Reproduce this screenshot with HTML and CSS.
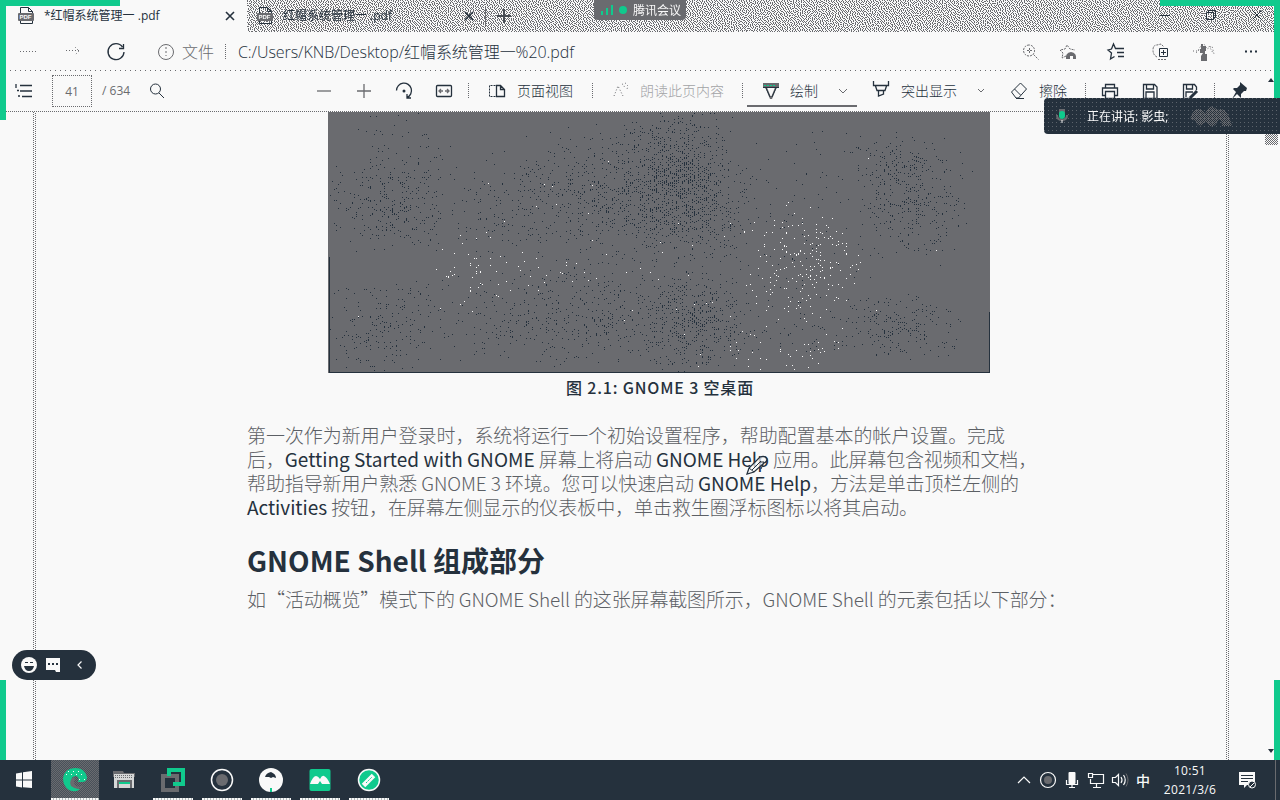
FILE: index.html
```html
<!DOCTYPE html>
<html lang="zh-CN">
<head>
<meta charset="utf-8">
<title>红帽系统管理一 .pdf</title>
<link rel="stylesheet" href="styles.css">
</head>
<body>
<div class="screen">
  <header class="tabs">
    <canvas class="grain" id="tabGrain" width="1280" height="32"></canvas>
    <div class="tab active">
      <svg class="file" width="16" height="18" viewBox="0 0 16 18"><path class="ln" d="M2.500 16.500V.5h8l4 4v12zM10.500.5v4h4"/><rect x="0" y="6" width="16" height="8" rx="1" fill="#6a6b6f"/><text x="1.500" y="12.400" class="pdf">PDF</text></svg>
      <span class="title t1">*红帽系统管理一 .pdf</span>
      <svg width="10" height="10" viewBox="0 0 10 10"><path class="ln x" d="M1 1l8 8M9 1l-8 8"/></svg>
    </div>
    <div class="tab second">
      <svg class="file" width="16" height="18" viewBox="0 0 16 18"><path class="ln" d="M2.500 16.500V.5h8l4 4v12zM10.500.5v4h4"/><rect x="0" y="6" width="16" height="8" rx="1" fill="#6a6b6f"/><text x="1.500" y="12.400" class="pdf">PDF</text></svg>
      <span class="title t2">红帽系统管理一 .pdf</span>
      <svg width="10" height="10" viewBox="0 0 10 10"><path class="ln x" d="M1 1l8 8M9 1l-8 8"/></svg>
    </div>
    <svg class="plus" width="16" height="16" viewBox="0 0 16 16"><path d="M8 1v14M1 8h14" stroke="#484d54" stroke-width="2"/></svg>
    <div class="winctl">
      <svg width="12" height="12" viewBox="0 0 12 12"><path class="ln" d="M1 6.500h10"/></svg>
      <svg width="12" height="12" viewBox="0 0 12 12"><path class="ln" d="M1.500 3.500h7v7h-7zM3.500 3.500v-2h7v7h-2"/></svg>
      <svg width="12" height="12" viewBox="0 0 12 12"><path class="ln" d="M1.500 1.500l9 9M10.500 1.500l-9 9"/></svg>
    </div>
  </header>

  <nav class="address">
    <svg viewBox="0 0 24 24"><path class="gy dots" d="M4 11.500h16"/></svg>
    <svg viewBox="0 0 24 24"><path class="gy dots" d="M5 10.500h13M14 7l4 4-4 4"/></svg>
    <svg viewBox="0 0 24 24"><path class="ln w" d="M18.500 7A8 8 0 1 0 20 12M19.500 4v4.500H15"/></svg>
    <svg viewBox="0 0 24 24"><circle class="gy" cx="12" cy="12" r="7.500"/><path class="gy" stroke-dasharray="2 2" d="M12 7v9"/></svg>
    <span class="scheme">文件</span>
    <i class="sep"></i>
    <span class="url"><span data-w="336">C:/Users/KNB/Desktop/<span class="han">红帽系统管理一</span>%20.pdf</span></span>
    <svg viewBox="0 0 24 24"><path class="gy fine" d="M10 5a5.500 5.500 0 1 0 .1 0M14.500 14.500l5 5M8 10.500h5M10.500 8v5"/></svg>
    <svg viewBox="0 0 24 24"><path class="gy fine" d="M9 16l-4 2 1-5-3-3 5-1 2-4 3 4 5 1"/><path d="M9 19q-1-6 5-7 6 1 5 7h-3v-3h-3v3z" fill="#6a6b6f"/></svg>
    <svg viewBox="0 0 24 24"><path class="ln w" d="M13 8.500h-1.500L9.500 4 7.500 9 4 10l3.500 3-1 6 4-2.500M12 8.500h8M13 12.500h7M14 16.500h6"/></svg>
    <svg viewBox="0 0 24 24"><path class="gy fine" d="M8 17q-4-2-4-7 0-5 4-5l4-1 3 3M9 19.500h9"/><path class="ln" d="M18.500 16.500V8.500h-8v8zM14.500 10v5M12 12.500h5"/></svg>
    <svg viewBox="0 0 24 24"><path class="gy dots" d="M1 11h5l2-4 4-3 3 5 5-3 2 8M4 13l4-4M17 6l4 7"/><path d="M9 4h2v2h3v5h-1v3h2v7H9v-5l2-3H8V9h1z" fill="#6a6b6f"/></svg>
    <svg viewBox="0 0 24 24"><path d="M6 10.500h2v2H6zm5 0h2v2h-2zm5 0h2v2h-2z" fill="#25313d"/></svg>
  </nav>

  <div class="tools">
    <svg viewBox="0 0 24 24"><path class="ln w" d="M8 6.500h12M8 12h12M10 17.500h10M4 5v4M5 11.500h2M6 17h2"/></svg>
    <span class="pagebox">41</span>
    <span class="total">/ 634</span>
    <svg viewBox="0 0 24 24"><circle class="ln" cx="10.500" cy="10" r="5"/><path class="ln" d="M14 14l5 5"/></svg>
    <svg viewBox="0 0 24 24"><path class="gy w" d="M5 12h14"/></svg>
    <svg viewBox="0 0 24 24"><path class="gy w" d="M5 12h14M12 5v14"/></svg>
    <svg viewBox="0 0 24 24"><path class="ln w" d="M4.500 11.500A7.500 7.500 0 1 1 15 18.500M15 15v4h4"/><circle cx="12" cy="12" r="1.500" fill="#25313d"/></svg>
    <svg viewBox="0 0 24 24"><rect class="ln w" x="4.500" y="6.500" width="15" height="11" rx="1"/><path class="gy w" d="M7 12h4M13 12h4M9 10l-2 2 2 2M15 10l2 2-2 2"/></svg>
    <i class="sep"></i>
    <svg viewBox="0 0 24 24"><path class="ln" stroke-dasharray="2 1" d="M10.500 6.500h-6v11h6"/><path class="ln w" d="M11.500 6.500h4l4 4v7h-8zM15.500 6.500v4h4"/></svg>
    <span class="label">页面视图</span>
    <i class="sep"></i>
    <svg viewBox="0 0 24 24"><path class="gy dots" d="M5 17L9 7l5 10M13 5q3 1 2 4M16 4q4 2 2 6"/></svg>
    <span class="label off">朗读此页内容</span>
    <i class="sep"></i>
    <span class="draw"><svg viewBox="0 0 24 24"><path d="M4 4h16v4h-2l-5 12h-2L6 8H4z" fill="#6a6b6f"/><path d="M8 8.500h8L12.500 17h-1z" fill="#f9f9f9"/><path d="M5 6.500h12" stroke="#10ca8d" stroke-dasharray="2 1"/><path class="ln" d="M4 8.500h16M7 9l4 9M17 9l-4 9"/></svg></span>
    <span class="label dim">绘制</span>
    <svg viewBox="0 0 24 24"><path class="gy" d="M8 10l4 4 4-4"/></svg>
    <svg class="lift" viewBox="0 0 24 24"><path class="ln w" d="M4.500 4v4.500h15V4M6.500 9l1.500 4.500h8L17.500 9M9.500 14v5l5-2v-3"/></svg>
    <span class="label dim">突出显示</span>
    <svg viewBox="0 0 24 24"><path class="gy" d="M9 10l3 3 3-3"/></svg>
    <svg viewBox="0 0 24 24"><path class="ln" d="M4.500 13l9-9 6 6-8 9H9zM7.500 10l6 6M9 19.500h8"/></svg>
    <span class="label dim">擦除</span>
    <i class="sep"></i>
    <svg viewBox="0 0 24 24"><path class="ln w" d="M7.500 9V5.500h9V9M7 16.500H4.500V9h15v7.500H17M7.500 12.500h9v7h-9z"/></svg>
    <svg viewBox="0 0 24 24"><path class="ln w" d="M5.500 5.500h11l2.500 2.500v11.500H5.500zM8.500 6v4h7V6M8 19v-6h8v6"/></svg>
    <svg viewBox="0 0 24 24"><path class="ln w" d="M12 19.500H5.500v-14h11L18.500 8v3M8.500 6v4h6V6M8 18v-5h7"/><path d="M12 19l7-7" stroke="#25313d" stroke-width="3"/></svg>
    <i class="sep"></i>
    <svg viewBox="0 0 24 24"><path d="M13 3l7 6-1 3-2 0-3 3v4l-4-4-5 5 4-7-3-3 1-1h3l3-3z" fill="#25313d"/></svg>
  </div>

  <main class="viewer">
    <article class="page">
      <canvas class="figure" id="figure" width="662" height="262"></canvas>
      <p class="caption"><span data-w="188">图 2.1: GNOME 3 空桌面</span></p>
      <div class="body">
        <p><span data-w="758">第一次作为新用户登录时，系统将运行一个初始设置程序，帮助配置基本的帐户设置。完成</span></p>
        <p><span data-w="790">后，<b data-w="250">Getting Started with GNOME</b> 屏幕上将启动 <b data-w="113">GNOME Help</b> 应用。此屏幕包含视频和文档，</span></p>
        <p><span data-w="772">帮助指导新用户熟悉 GNOME 3 环境。您可以快速启动 <b data-w="113">GNOME Help</b>，方法是单击顶栏左侧的</span></p>
        <p><span data-w="671"><b data-w="80">Activities</b> 按钮，在屏幕左侧显示的仪表板中，单击救生圈浮标图标以将其启动。</span></p>
      </div>
      <h2><span data-w="298">GNOME Shell 组成部分</span></h2>
      <div class="body"><p><span data-w="819">如<q>“</q>活动概览<q class="r">”</q>模式下的 GNOME Shell 的这张屏幕截图所示，GNOME Shell 的元素包括以下部分：</span></p></div>
    </article>
    <div class="scroll"><i class="thumb"></i><i class="down"></i></div>
  </main>

  <footer class="taskbar">
    <div class="apps">
      <span class="start"><svg viewBox="0 0 24 24"><path fill="#f9f9f9" d="M4 5.500l6-1v7H4zM11 4.300l9-1.300v8.500h-9zM4 12.500h6v7l-6-1zM11 12.500h9V20l-9-.8z"/></svg></span>
      <span class="app on"><svg viewBox="0 0 24 24"><path fill="#10ca8d" d="M0 10Q2 0 12 0t12 9q0 5-5 5h-4q2-5-2-6-5 0-5 6 1 6 9 7-4 4-11 1Q0 18 0 10z"/><path fill="#6a6b6f" d="M8 18q-3-7 5-9-4 6 0 9 4 2 8-1-5 7-13 1z"/><path stroke="#f9f9f9" stroke-dasharray="1 4" d="M5 3.500h15M3 6.500h18M16 11.500h7"/></svg></span>
      <span class="app no"><svg viewBox="0 0 24 24"><path fill="#6a6b6f" d="M1 3h10l1 2h11v4H1z"/><path fill="#d5d7d7" d="M2 6h20v14H2z"/><path fill="none" stroke="#6a6b6f" stroke-width="2" d="M6 20v-7h13v7"/><path fill="#10ca8d" d="M7 14h11v2H7z"/><path stroke="#6a6b6f" stroke-dasharray="1 1" d="M3 7.500h18M3 9.500h18"/></svg></span>
      <span class="app"><svg viewBox="0 0 24 24"><path fill="none" stroke="#6a6b6f" stroke-width="4" d="M2 8h14v14H2z"/><path fill="none" stroke="#10ca8d" stroke-width="4" d="M8 8V2h14v14H12"/></svg></span>
      <span class="app"><svg viewBox="0 0 24 24"><circle cx="12" cy="12" r="10.500" fill="none" stroke="#f9f9f9" stroke-width="1.500"/><circle cx="12" cy="12" r="6" fill="#6a6b6f"/></svg></span>
      <span class="app"><svg viewBox="0 0 24 24"><circle cx="12" cy="12" r="12" fill="#f9f9f9"/><path fill="#25313d" d="M6 9q1-4 6-5 5 2 5 6l-3-1-2 1-2-1z"/><path stroke="#10ca8d" stroke-width="2" d="M12 20v4"/></svg></span>
      <span class="app"><svg viewBox="0 0 24 24"><rect x="1.500" y="1" width="21" height="22" rx="2" fill="#10ca8d"/><path fill="#f9f9f9" d="M2 16q3-8 6-8 2 0 4 3 2-4 4-3 3 1 6 8h-8l-2-3-2 3z"/></svg></span>
      <span class="app"><svg viewBox="0 0 24 24"><circle cx="12" cy="12" r="10.500" fill="#10ca8d" stroke="#f9f9f9" stroke-width="1.500"/><path stroke="#f9f9f9" stroke-width="5" d="M6.500 17.500l10-10"/><path stroke="#10ca8d" stroke-width="1" stroke-dasharray="2 1" d="M9 15l6-6"/></svg></span>
    </div>
    <div class="tray">
      <svg viewBox="0 0 24 24"><path class="wh" d="M6 15l6-6 6 6"/></svg>
      <svg viewBox="0 0 24 24"><circle class="wh" cx="12" cy="12" r="7.500"/><circle cx="12" cy="12" r="4" fill="#6a6b6f"/></svg>
      <svg viewBox="0 0 24 24"><rect x="8.500" y="4" width="7" height="12" rx="1" fill="#f9f9f9"/><path class="wh" d="M6.500 12v4.500h11V12M12 16v4M9 19.500h6"/></svg>
      <svg viewBox="0 0 24 24"><path class="wh" d="M9 6.500h10.500v9h-13V11M4.500 5.500h4v4h-4zM12.500 16v3M9 19.500h8"/></svg>
      <svg viewBox="0 0 24 24"><path class="wh" d="M4.500 9.500h3l3-3v11l-3-3h-3zM13 9q2 3 0 6M15.500 7q3.500 5 0 10"/><path class="gy" d="M18 5.500q4 6.500 0 13"/></svg>
      <span class="ime">中</span>
      <span class="clock"><span>10:51</span><span>2021/3/6</span></span>
      <svg viewBox="0 0 24 24"><path fill="#f9f9f9" d="M4 4h16v10l-4 3h-4l-3 3v-3H4z"/><path stroke="#25313d" d="M6 7.500h12M6 10.500h12M6 13.500h7"/><circle cx="17" cy="16.500" r="3.500" fill="#25313d" stroke="#f9f9f9"/><path stroke="#f9f9f9" d="M15 19l4-4"/></svg>
      <i class="edge"></i>
    </div>
  </footer>

  <i class="frame tl"></i><i class="frame lt"></i><i class="frame tr"></i><i class="frame rt"></i><i class="frame lb"></i><i class="frame rb"></i>
  <div class="meeting"><svg width="12" height="10" viewBox="0 0 12 10"><path stroke="#10ca8d" stroke-width="2" d="M1 10V6M6 10V3M11 10V0"/></svg><i></i><span>腾讯会议</span></div>
  <div class="speaking"><svg width="12" height="16" viewBox="0 0 12 16"><path d="M3 1h6v4H3z" fill="#6a6b6f"/><rect x="3" y="3" width="6" height="8" rx="3" fill="#10ca8d"/><path fill="none" stroke="#6a6b6f" stroke-width="2" d="M1 7q0 5 5 5t5-5"/><path stroke="#f9f9f9" d="M6 12v3"/></svg><span>正在讲话: 影虫;</span><svg class="smudge" width="44" height="22" viewBox="0 0 44 22"><defs><pattern id="sp" width="2" height="2" patternUnits="userSpaceOnUse"><path fill="#6a6b6f" d="M0 0h1v1H0zM1 1h1v1H1z"/></pattern></defs><path fill="url(#sp)" d="M0 14Q4 2 10 4q4 1 5 5Q19-2 25 3q3 3 5 1 8 0 12 17H32q0-5-3-7-4 9-9 7-4-6-6-3-6 6-8-2z"/></svg></div>
  <div class="dock">
    <svg width="16" height="16" viewBox="0 0 16 16"><circle cx="8" cy="8" r="8" fill="#f9f9f9"/><path fill="#25313d" d="M4 5h3v1H4zM9 5h3v1H9zM3 9h10q-1 5-5 5T3 9z"/></svg>
    <svg width="14" height="14" viewBox="0 0 14 14"><path fill="#f9f9f9" d="M0 0h14v14h-4l-1-2H0z"/><path fill="#25313d" d="M2 5h2v2H2zM6 5h2v2H6zM10 5h2v2h-2z"/></svg>
    <svg width="5" height="8" viewBox="0 0 5 8"><path class="wh" d="M4.500.5L1 4l3.500 3.500"/></svg>
  </div>
  <svg class="pen" width="24" height="24" viewBox="0 0 24 24"><path d="M2 20l2-6L15 3q5-2 7 2 0 3-3 4L9 18z" fill="#f9f9f9" fill-opacity=".7" stroke="#25313d" stroke-width="1.300"/><path class="ln" d="M4 14l5 4M16 7l-9 9M15 8h4l-3 7"/></svg>
  <i class="uparrow"></i>
</div>
<script src="script.js"></script>
</body>
</html>
```
FILE: styles.css
```css
* { box-sizing: border-box; }
body { margin: 0; background: #f9f9f9; color: #25313d; font-family: "Open Sans", "Noto Sans CJK SC", sans-serif; }
p, h2 { margin: 0; }
i { display: block; }
svg { display: block; flex: none; }
.screen { position: relative; width: 1280px; height: 800px; overflow: hidden; display: flex; flex-direction: column; }
.ln, .gy, .wh { fill: none; stroke: #25313d; stroke-width: 1; }
.gy { stroke: #6a6b6f; }
.wh { stroke: #f9f9f9; stroke-width: 1.2; }
.ln.w, .gy.w { stroke-width: 1.3; }
.x { stroke-width: 1.6; }
.dots { stroke-dasharray: 1 2; }
.fine { stroke-dasharray: 2 1; }
.pdf { font: 700 6px "Liberation Sans", sans-serif; fill: #f9f9f9; }

.tabs { position: relative; height: 32px; flex: none; display: flex; align-items: center; padding-left: 6px; }
.grain { position: absolute; inset: 0; }
.tab { position: relative; display: flex; align-items: center; height: 32px; }
.active { width: 241px; background: #f9f9f9; padding-left: 12px; }
.second { width: 239px; height: 20px; border-right: 1px solid #6a6b6f; padding-left: 10px; }
.title { font-size: 12px; line-height: 20px; white-space: nowrap; }
.t1 { margin-left: 10px; width: 181px; }
.t2 { margin-left: 10px; width: 181px; }
.plus { position: relative; margin-left: 10px; }
.winctl { position: relative; display: flex; gap: 34px; margin-left: 647px; margin-top: -3px; }

.address { height: 39px; flex: none; display: grid; grid-template-columns: 45px 43px 50px 28px 43px 13px 781px 38px 47px 45px 43px 47px 41px; align-items: center; padding-left: 16px; background: repeating-linear-gradient(90deg, #6a6b6f 0 1px, #f9f9f9 1px 5px) 0 100% / 100% 1px no-repeat; }
.address svg, .tools svg, .tray svg, .apps svg { width: 24px; height: 24px; }
.scheme { font-size: 16px; color: #6a6b6f; font-weight: 300; line-height: 24px; }
.sep { width: 1px; height: 15px; background: repeating-linear-gradient(#6a6b6f 0 1px, #f9f9f9 1px 2px); }
.url { font-size: 16px; line-height: 24px; white-space: nowrap; font-weight: 350; }
.han { font-weight: 300; }

.tools { height: 41px; flex: none; display: grid; grid-template-columns: 40px 50px 43px 167px 40px 40px 40px 36px 17px 32px 75px 17px 31px 102px 17px 31px 41px 38px 32px 68px 38px 32px 46px 13px 40px 40px 36px 13px 41px; align-items: center; padding-left: 12px; padding-bottom: 2px; background: repeating-linear-gradient(90deg, #6a6b6f 0 1px, #f9f9f9 1px 2px) 0 100% / 100% 1px no-repeat; }
.pagebox { width: 40px; height: 32px; border: 1px dotted #6a6b6f; font-size: 12px; line-height: 31px; text-align: center; color: #6a6b6f; }
.total { font-size: 12px; color: #6a6b6f; white-space: nowrap; }
.label { font-size: 14px; line-height: 22px; white-space: nowrap; font-weight: 300; }
.off { color: #a2a3a6; font-weight: 300; }
.draw { position: relative; }
.draw::after { content: ""; position: absolute; left: -12px; top: 26px; width: 110px; height: 2px; background: #6a6b6f; }
.lift { margin-top: -3px; }

.viewer { position: relative; flex: 1; min-height: 0; display: flex; justify-content: space-between; padding-left: 33px; }
.page { width: 1196px; padding-left: 214px; position: relative; }
.page::before, .page::after { content: ""; position: absolute; top: 0; bottom: 0; width: 3px; left: 0; background: linear-gradient(#6a6b6f 0 0) 0 0 / 1px 1px, #f9f9f9; background: repeating-linear-gradient(#6a6b6f 0 1px, #f9f9f9 1px 2px) 0 0 / 1px 100% no-repeat, repeating-linear-gradient(#f9f9f9 0 1px, #6a6b6f 1px 2px) 2px 0 / 1px 100% no-repeat; }
.page::after { left: auto; right: 0; }
.figure { display: block; margin-left: 81px; }
.caption { margin-left: 82px; width: 662px; text-align: center; font: 500 16px/24px "Noto Sans CJK SC", sans-serif; margin-top: 1px; white-space: nowrap; }
.body { font: 300 19px/24px "Noto Sans CJK SC", sans-serif; color: #5c6065; white-space: nowrap; margin-top: 24px; }
.body b { font-weight: 400; color: #25313d; display: inline-block; }
.body q { quotes: none; display: inline-block; width: 19px; text-align: right; }
.body q.r { text-align: left; }
.body q::before, .body q::after { content: none; }
h2 { font: 700 28px/36px "Noto Sans CJK SC", sans-serif; margin-top: 23px; white-space: nowrap; }
h2 + .body { margin-top: 9px; }
.scroll { width: 14px; margin-right: 2px; display: flex; flex-direction: column; justify-content: space-between; align-items: center; padding: 22px 0 7px; }
.thumb { width: 13px; height: 11px; background: repeating-conic-gradient(#6a6b6f 0 25%, #f9f9f9 0 50%) 0 0 / 2px 2px; }
.down { border: 3px solid transparent; border-top: 4px solid #25313d; border-bottom: 0; }
.uparrow { position: absolute; left: 1268px; top: 78px; border: 3px solid transparent; border-bottom: 4px solid #25313d; border-top: 0; }

.taskbar { height: 40px; flex: none; background: #25313d; display: flex; justify-content: space-between; }
.apps { display: flex; align-items: stretch; }
.apps span { display: flex; align-items: center; justify-content: center; width: 49px; }
.apps .start { width: 51px; padding-right: 3px; }
.app { position: relative; }
.apps .app:not(.on) { padding-right: 2px; }
.app::after { content: ""; position: absolute; left: 4px; right: 5px; bottom: 0; height: 2px; background: repeating-linear-gradient(90deg, #f9f9f9 0 2px, #b4bcbc 2px 3px); }
.apps .on { width: 48px; margin-right: 1px; background: repeating-conic-gradient(#6a6b6f 0 25%, #48515a 0 50%) 0 0 / 2px 2px; }
.app.on::after { left: 0; right: 0; }
.no::after { content: none; }
.tray { display: flex; align-items: center; width: 268px; color: #f9f9f9; }
.ime { width: 22px; text-align: center; font: 500 14px/20px "Noto Sans CJK SC", sans-serif; }
.clock { width: 71px; margin-right: 10px; padding-left: 1px; display: flex; flex-direction: column; text-align: center; font-size: 12px; line-height: 19px; letter-spacing: .3px; }
.edge { width: 1px; height: 40px; background: #6a6b6f; margin-left: 16px; }

.frame { position: absolute; background: #10ca8d; width: 6px; }
.tl { left: 0; top: 0; width: 120px; height: 6px; }
.lt { left: 0; top: 0; height: 120px; }
.tr { right: 0; top: 0; width: 120px; height: 6px; }
.rt { right: 0; top: 0; height: 120px; }
.lb { left: 0; top: 680px; height: 80px; }
.rb { right: 0; top: 680px; height: 80px; }
.meeting { position: absolute; left: 594px; top: 0; width: 92px; height: 20px; border-radius: 0 0 4px 4px; background: #6a6b6f; color: #f9f9f9; display: flex; align-items: center; padding-left: 7px; font-size: 12px; white-space: nowrap; }
.meeting i { width: 8px; height: 8px; border-radius: 4px; background: #10ca8d; margin: 0 6px; }
.speaking { position: absolute; left: 1044px; top: 98px; width: 240px; height: 36px; border-radius: 4px; background: radial-gradient(circle at .5px .5px, #5c636b .6px, transparent .7px) 0 0 / 4px 4px, #25313d; color: #f9f9f9; display: flex; align-items: center; padding-left: 12px; font-size: 12px; white-space: nowrap; }
.speaking span { margin-left: 19px; width: 103px; }
.dock { position: absolute; left: 12px; top: 650px; width: 84px; height: 30px; border-radius: 15px; background: #25313d; display: flex; align-items: center; padding-left: 9px; }
.dock svg:nth-child(2) { margin-left: 9px; }
.dock svg:nth-child(3) { margin-left: 17px; }
.pen { position: absolute; left: 745px; top: 454px; }
```
FILE: script.js
```js
// Even tone drawn with error diffusion between two colours, lightly jittered.
(function () {
  var c = document.getElementById('tabGrain'), g = c.getContext('2d'), s = 11;
  var w = c.width, h = c.height, e = new Float32Array(w * h).fill(0.38);
  g.fillStyle = '#f9f9f9';
  g.fillRect(0, 0, w, h);
  g.fillStyle = '#6a6b6f';
  for (var y = 0; y < h; y++) for (var x = 0; x < w; x++) {
    s = (s * 16807) % 2147483647;
    var i = y * w + x, on = e[i] > 0.5 + (s / 2147483647 - 0.5) * 0.3, d = e[i] - (on ? 1 : 0);
    if (on) g.fillRect(x, y, 1, 1);
    if (x + 1 < w) e[i + 1] += d * 7 / 16;
    if (y + 1 < h) {
      if (x) e[i + w - 1] += d * 3 / 16;
      e[i + w] += d * 5 / 16;
      if (x + 1 < w) e[i + w + 1] += d / 16;
    }
  }
})();

// Grey figure with clusters of dark and light specks.
(function () {
  var g = document.getElementById('figure').getContext('2d'), s = 7;
  function r() { s = (s * 16807) % 2147483647; return s / 2147483647; }
  function n() { return r() + r() - 1; }
  g.fillStyle = '#6a6b6f';
  g.fillRect(0, 0, 662, 261);
  function spray(color, cx, cy, rx, ry, count) {
    g.fillStyle = color;
    for (var k = 0; k < count; k++) {
      var x = Math.round((cx + n() * rx) / 2) * 2, y = Math.round(cy + n() * ry);
      if (x > 0 && x < 661 && y > 0 && y < 260) g.fillRect(x, y, 1, 1);
    }
  }
  var dark = '#25313d', light = '#f9f9f9';
  [[60, 95, 65, 45, 260], [75, 50, 60, 60, 100], [55, 212, 60, 50, 200],
   [180, 95, 80, 60, 150], [270, 80, 90, 70, 440], [345, 62, 62, 75, 820],
   [365, 95, 70, 60, 440], [275, 205, 130, 55, 360], [370, 210, 60, 55, 440],
   [475, 75, 90, 80, 55], [585, 90, 60, 60, 300], [565, 50, 55, 35, 120],
   [575, 215, 60, 35, 180], [490, 215, 110, 35, 90], [180, 210, 110, 45, 140],
   [330, 150, 330, 110, 180]
  ].forEach(function (a) { spray(dark, a[0], a[1], a[2], a[3], a[4]); });
  [[475, 155, 65, 65, 200], [140, 160, 45, 45, 40], [200, 160, 75, 35, 25],
   [465, 240, 75, 35, 45], [330, 150, 320, 120, 50]
  ].forEach(function (a) { spray(light, a[0], a[1], a[2], a[3], a[4]); });
  g.fillStyle = dark;
  g.fillRect(1, 145, 1, 116);
  g.fillRect(661, 200, 1, 61);
  g.fillRect(1, 260, 661, 1);
})();

// Fit each line to its set measure, emphasised runs first.
document.fonts.ready.then(function () {
  document.querySelectorAll('span[data-w]').forEach(function (el) {
    var runs = el.querySelectorAll('b'), fixed = 0, chars = el.textContent.length;
    runs.forEach(function (b) {
      var d = b.dataset.w - b.getBoundingClientRect().width;
      b.style.letterSpacing = d / b.textContent.length + 'px';
      fixed += b.textContent.length;
    });
    var diff = el.dataset.w - el.getBoundingClientRect().width;
    el.style.letterSpacing = diff / (chars - fixed) + 'px';
  });
});
```
